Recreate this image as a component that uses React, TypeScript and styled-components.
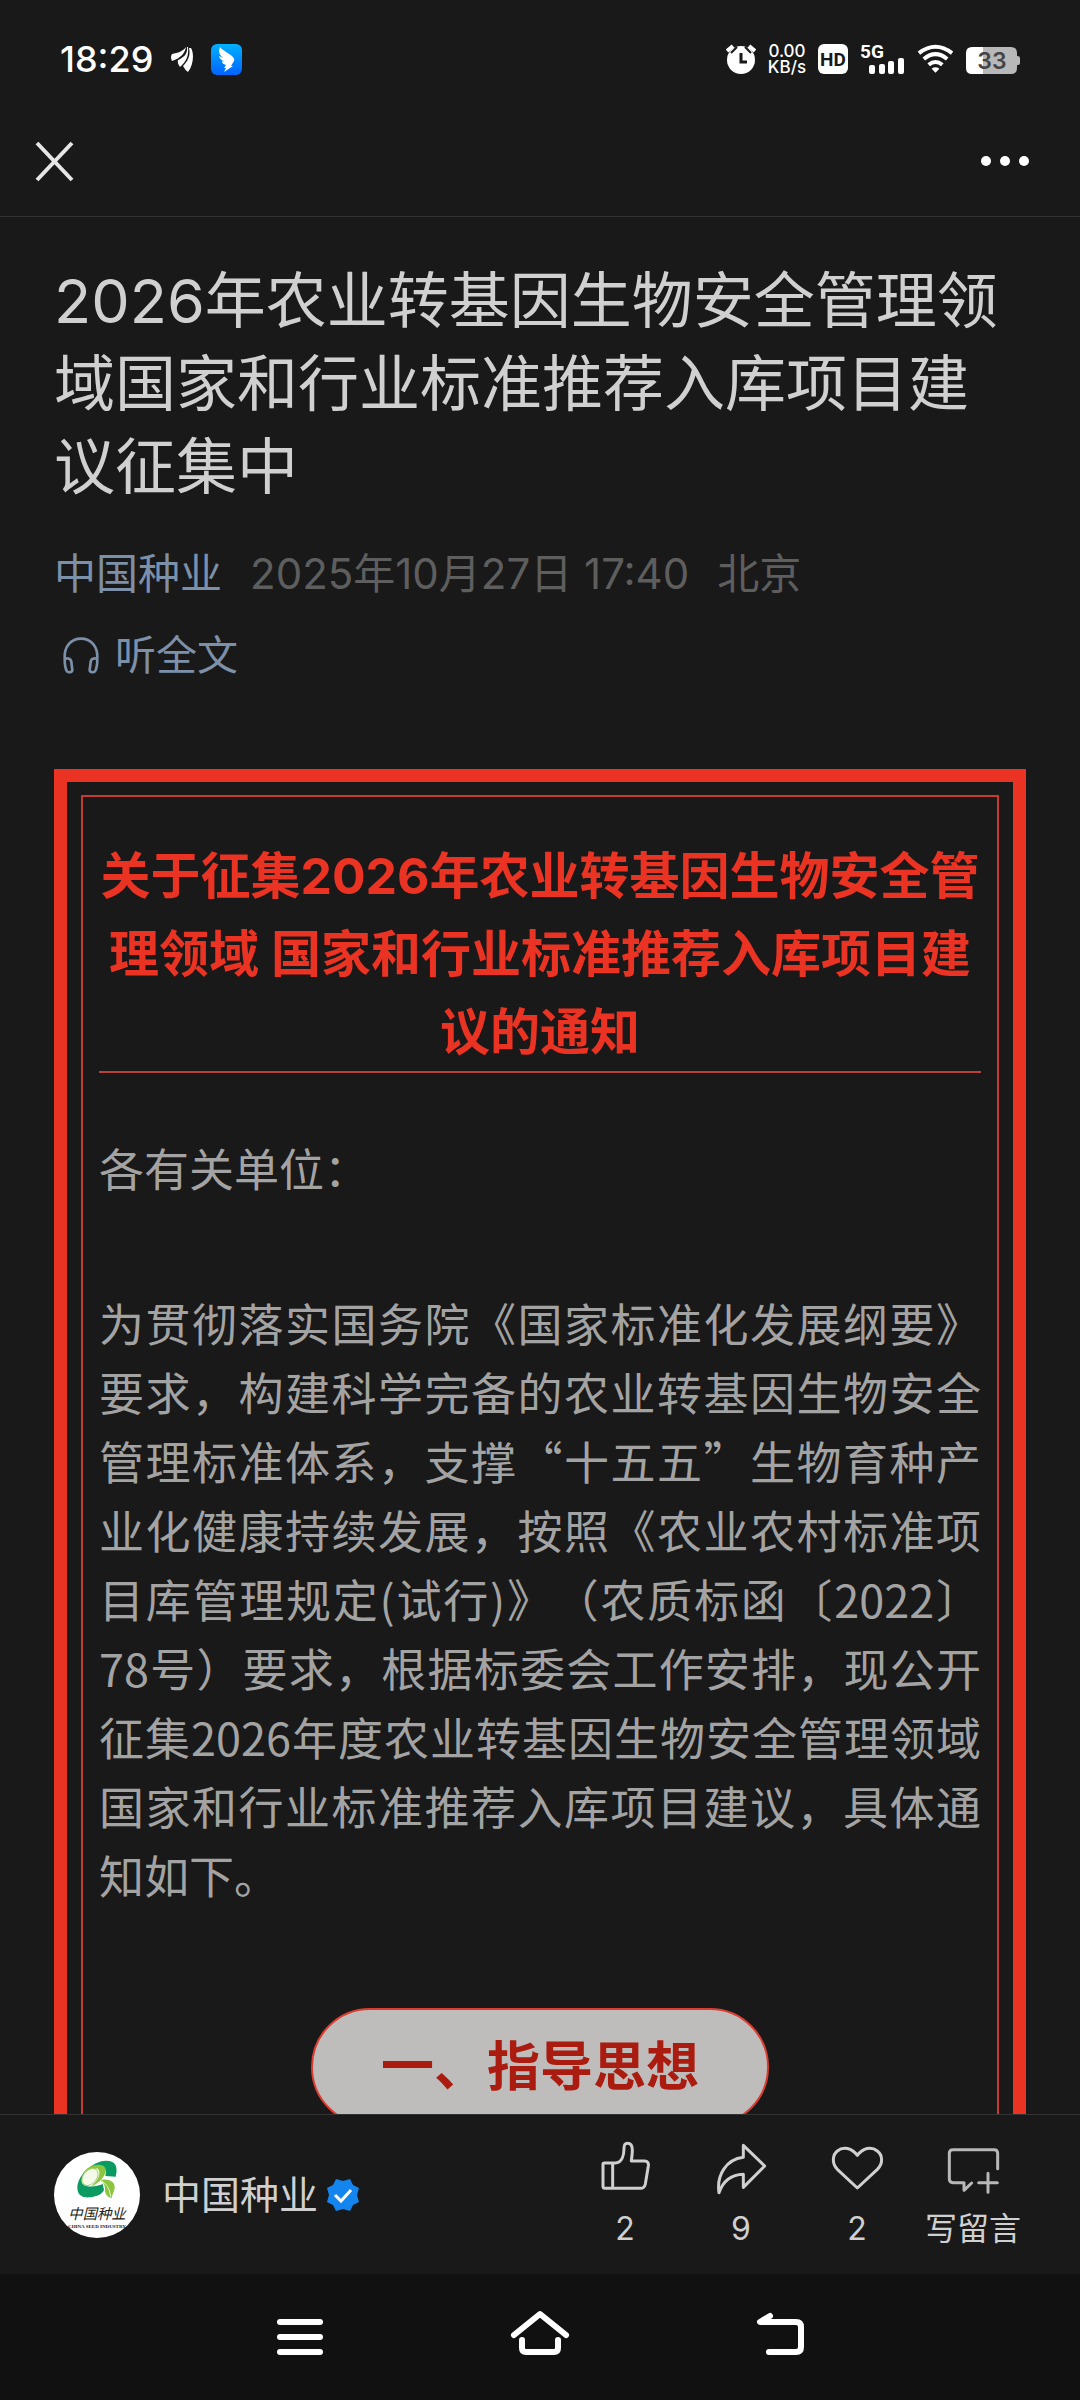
import React from "react";
import styled, { createGlobalStyle } from "styled-components";

const sans = `Inter, "Noto Sans CJK SC", sans-serif`;
const cjk = `"Noto Sans CJK SC", sans-serif`;

const GlobalStyle = createGlobalStyle`
  *, *::before, *::after { box-sizing: border-box; }
  body {
    margin: 0;
    background: #191919;
    font-family: ${sans};
    text-spacing-trim: space-all;
  }
  h1, h2, h3, p { margin: 0; font-weight: 400; }
  button {
    padding: 0;
    border: 0;
    background: none;
    color: inherit;
    font: inherit;
    cursor: pointer;
  }
  a { color: inherit; text-decoration: none; }
  svg { display: block; flex: none; }
`;

const Screen = styled.div`
  display: flex;
  flex-direction: column;
  height: 100vh;
  background: #191919;
  color: #d0d0d0;
`;

/* Status bar */

const StatusBar = styled.div`
  display: flex;
  flex: none;
  align-items: center;
  justify-content: space-between;
  height: 106px;
  padding: 12px 60px 0;
  color: #fff;
`;

const StatusGroup = styled.div<{ $gap: number }>`
  display: flex;
  align-items: center;
  gap: ${(p) => p.$gap}px;
`;

const Clock = styled.time`
  font-size: 36px;
  font-weight: 500;
  line-height: 40px;
`;

const NetSpeed = styled.div`
  display: flex;
  flex-direction: column;
  align-items: center;
  width: 38px;
  font-weight: 500;
  font-size: 17px;
  line-height: 16px;
`;

/* Title bar */

const TitleBar = styled.header`
  display: flex;
  flex: none;
  align-items: center;
  justify-content: space-between;
  height: 111px;
  padding: 0 47px 0 34px;
  border-bottom: 1px solid #333;
`;

const IconButton = styled.button`
  display: flex;
  align-items: center;
  justify-content: center;
`;

/* Article */

const Article = styled.main`
  flex: 1;
  min-height: 0;
  overflow: hidden;
  padding: 43px 54px 0;
`;

const Headline = styled.h1`
  font-size: 61px;
  line-height: 83px;
`;

const Meta = styled.div`
  display: flex;
  gap: 28px;
  margin-top: 36px;
  color: #5e5e5e;
  font-size: 42px;
  line-height: 58px;
`;

const Author = styled.a`
  color: #7d90a9;
`;

const Listen = styled.button`
  display: flex;
  align-items: center;
  gap: 15px;
  margin: 23px 0 0 8px;
  color: #7d90a9;
  font-size: 41px;
  line-height: 58px;
`;

const Frame = styled.section`
  margin-top: 85px;
  padding: 13px 14px;
  border: 13px solid #ea3323;
`;

const FrameInner = styled.div`
  padding: 40px 16px 60px;
  border: 2px solid #c63a2e;
`;

const NoticeTitle = styled.h2`
  border-bottom: 2px solid #b9413a;
  color: #ea3323;
  font-size: 50px;
  font-weight: 700;
  line-height: 78px;
  text-align: center;
`;

const Paragraph = styled.p<{ $gap: number }>`
  margin-top: ${(p) => p.$gap}px;
  color: #a3a3a3;
  font-family: ${cjk};
  font-size: 45px;
  line-height: 69px;
  text-align: justify;
`;

const SectionPill = styled.h3`
  width: fit-content;
  margin: 99px auto 0;
  padding: 0 68px;
  border: 2px solid #dc3d30;
  border-radius: 59px;
  background: #bfbdbb;
  color: #aa1c10;
  font-size: 53px;
  font-weight: 700;
  line-height: 114px;
  white-space: nowrap;
`;

/* Bottom bar */

const BottomBar = styled.footer`
  display: flex;
  flex: none;
  align-items: center;
  justify-content: space-between;
  height: 160px;
  padding: 0 49px 0 54px;
  border-top: 1px solid #333;
`;

const Account = styled.a`
  display: flex;
  align-items: center;
  font-size: 39px;
  line-height: 56px;
`;

const AccountName = styled.span`
  margin: 0 8px 0 22px;
`;

const Actions = styled.div`
  display: flex;
`;

const Action = styled.button`
  display: flex;
  flex-direction: column;
  align-items: center;
  gap: 11px;
  width: 116px;
  padding-top: 4px;
  font-size: 32px;
  line-height: 46px;
  white-space: nowrap;
`;

const SystemNav = styled.nav`
  display: flex;
  flex: none;
  justify-content: center;
  height: 126px;
  background: #111;
`;

const NavButton = styled(IconButton)`
  width: 240px;
`;

const BirdIcon = () => (
  <svg width="22" height="30" viewBox="0 0 22 30" fill="#fff" aria-hidden="true">
    <path d="M1 10C7 9 12 7 15 3C14 9 10 14 1 17Q-1 13 1 10Z" />
    <path d="M16 3C17 10 12 14 7 16Q6 19 9 23C15 18 18 12 17 3Z" />
    <path d="M18 4C20 12 16 18 12 22Q14 26 17 28C23 20 23 9 20 4Z" />
  </svg>
);

const WingAppIcon = () => (
  <svg width="31" height="31" viewBox="0 0 31 31" aria-hidden="true">
    <defs>
      <linearGradient id="wingSky" x1="0" y1="0" x2="0" y2="1">
        <stop offset="0" stopColor="#00b0ff" />
        <stop offset="1" stopColor="#0064ff" />
      </linearGradient>
    </defs>
    <rect width="31" height="31" rx="6" fill="url(#wingSky)" />
    <path
      d="M9 3C12 7 18 9 22 13Q24 15 23 17L20 22H22L13 28L15 24H13L15 21C12 20 11 19 11 17L14 18C10 16 8 14 8 12L12 14C9 11 8 9 8 7Z"
      fill="#fff"
    />
  </svg>
);

const AlarmIcon = () => (
  <svg width="30" height="30" viewBox="0 0 30 30" aria-hidden="true">
    <circle cx="15" cy="16" r="14" fill="#fff" />
    <path d="M5 9L11 3M25 9L19 3" stroke="#191919" strokeWidth="2" />
    <path d="M1 7L7 2M29 7L23 2" stroke="#fff" strokeWidth="4" />
    <path d="M15 9V18H21" fill="none" stroke="#191919" strokeWidth="3" />
  </svg>
);

const HdIcon = () => (
  <svg width="30" height="30" viewBox="0 0 30 30" role="img">
    <rect width="30" height="30" rx="6" fill="#fff" />
    <text x="15" y="22" textAnchor="middle" fontFamily="Roboto, sans-serif" fontSize="19" fontWeight="700" fill="#191919">
      HD
    </text>
  </svg>
);

const SignalIcon = () => (
  <svg width="45" height="42" viewBox="0 -6 45 42" role="img">
    <text x="0" y="14" fontFamily="Roboto, sans-serif" fontSize="19" fontWeight="700" fill="#fff">
      5G
    </text>
    <g fill="#fff">
      <rect x="9" y="21" width="6" height="9" rx="2" />
      <rect x="19" y="20" width="6" height="10" rx="2" />
      <rect x="28" y="17" width="6" height="13" rx="2" />
      <rect x="38" y="14" width="6" height="16" rx="2" />
    </g>
  </svg>
);

const WifiIcon = () => (
  <svg width="37" height="30" viewBox="0 0 38 30" fill="none" stroke="#fff" strokeWidth="4" aria-hidden="true">
    <path d="M2 9Q19-4 36 9" />
    <path d="M7 15Q19 5 31 15" />
    <path d="M12 21Q19 15 26 21" />
    <path d="M19 29L15 25Q19 22 23 25Z" fill="#fff" stroke="none" />
  </svg>
);

const BatteryIcon = () => (
  <svg width="54" height="30" viewBox="0 0 54 30" role="img">
    <path d="M6 3H17V30H6Q0 30 0 24V9Q0 3 6 3Z" fill="#fff" />
    <path d="M17 3H45Q51 3 51 9V12Q54 12 54 14V19Q54 21 51 21V24Q51 30 45 30H17Z" fill="#b8b8b8" />
    <text x="26" y="25" textAnchor="middle" fontFamily="Inter, sans-serif" fontSize="23" fontWeight="600" fill="#444">
      33
    </text>
  </svg>
);

const CloseIcon = () => (
  <svg width="41" height="41" viewBox="0 0 41 41" stroke="#e6e6e6" strokeWidth="4" aria-hidden="true">
    <path d="M3 2L38 39M38 2L3 39" />
  </svg>
);

const MoreIcon = () => (
  <svg width="56" height="20" viewBox="0 0 56 20" fill="#fff" aria-hidden="true">
    <circle cx="9" cy="10" r="5" />
    <circle cx="28" cy="10" r="5" />
    <circle cx="47" cy="10" r="5" />
  </svg>
);

const HeadphonesIcon = () => (
  <svg width="38" height="38" viewBox="0 0 114 114" fill="none" stroke="currentColor" strokeWidth="8" aria-hidden="true">
    <path d="M8 68C6 30 28 8 57 8C86 8 108 30 106 68" />
    <path d="M8 68C8 86 10 98 15 106C20 111 31 109 31 102L28 78C27 66 10 64 8 72" />
    <path d="M106 68C106 86 104 98 99 106C94 111 83 109 83 102L86 78C87 66 104 64 106 72" />
  </svg>
);

const AvatarLogo = () => (
  <svg width="86" height="86" viewBox="162 154 258 258" role="img">
    <circle cx="291" cy="283" r="129" fill="#fff" />
    <path
      d="M347 228C355 196 346 180 318 180C275 182 232 225 232 262C232 285 250 292 270 290C292 287 306 281 312 268L308 250C290 258 262 262 248 250C238 232 262 200 290 195C312 192 322 208 316 226Z"
      fill="#0b9a62"
    />
    <path d="M250 217C264 192 306 184 316 202C322 218 304 246 272 258C300 236 304 214 292 203Z" fill="#8cc63f" />
    <ellipse cx="270" cy="229" rx="20" ry="29" transform="rotate(42 270 229)" fill="#f4f9ea" stroke="#a9d36f" strokeWidth="3" />
    <path d="M298 239C325 232 343 242 344 258C345 270 336 280 335 293C318 288 314 276 315 262C314 250 308 243 298 239Z" fill="#8cc63f" />
    <path d="M300 239Q328 250 332 288" fill="none" stroke="#e6f3d3" strokeWidth="3" />
    <text x="291" y="355" textAnchor="middle" fontFamily="Noto Sans CJK SC, sans-serif" fontSize="43" fontStyle="italic" fill="#222">
      中国种业
    </text>
    <text x="291" y="382" textAnchor="middle" fontFamily="Liberation Serif, serif" fontSize="15" fontWeight="700" fill="#222">
      CHINA SEED INDUSTRY
    </text>
  </svg>
);

const VerifiedIcon = () => (
  <svg width="34" height="34" viewBox="0 0 34 34" aria-hidden="true">
    <path
      d="M10 1L17 3L24 1L27 7L33 10L31 17L33 24L27 27L24 33L17 31L10 33L7 27L1 24L3 17L1 10L7 7Z"
      fill="#1485ee"
    />
    <path d="M9 17L15 23L25 12" fill="none" stroke="#fff" strokeWidth="3" />
  </svg>
);

type LineIconProps = { viewBox: string; d: string; color?: string };

const LineIcon = ({ viewBox, d, color = "#d0d0d0" }: LineIconProps) => (
  <svg width="54" height="54" viewBox={viewBox} fill="none" stroke={color} strokeWidth="9" strokeLinejoin="round" strokeLinecap="round" aria-hidden="true">
    <path d={d} />
  </svg>
);

const actions = [
  {
    name: "点赞",
    label: "2",
    viewBox: "116 123 162 162",
    d: "M131 193Q131 189 135 189H168C188 188 194 165 194 145C194 133 197 130 204 130C214 130 219 138 219 150C219 165 217 172 216 183H256C265 183 268 189 267 198L258 252Q255 265 244 265H137Q131 265 131 259ZM160 190V265",
  },
  {
    name: "分享",
    label: "9",
    viewBox: "463 123 162 162",
    d: "M551 136L615 198L551 262V223C515 224 490 245 478 278C470 225 500 178 551 172Z",
  },
  {
    name: "推荐",
    label: "2",
    viewBox: "810 123 162 162",
    d: "M892 264L832 208C815 190 817 165 832 153C850 138 875 144 892 166C909 144 934 138 952 153C968 165 970 190 952 208Z",
  },
  {
    name: "写留言",
    label: "写留言",
    viewBox: "1160 123 162 162",
    d: "M1315 206V160Q1315 149 1304 149H1181Q1170 149 1170 160V237Q1170 248 1181 248H1214V271L1237 249M1258 248H1314M1286 220V277",
    color: "#b8b8b8",
  },
];

const MenuIcon = () => (
  <svg width="60" height="60" viewBox="0 0 60 60" fill="#fff" aria-hidden="true">
    <rect x="7" y="12" width="46" height="6" rx="3" />
    <rect x="7" y="27" width="46" height="6" rx="3" />
    <rect x="7" y="42" width="46" height="6" rx="3" />
  </svg>
);

const NavLineIcon = ({ d }: { d: string }) => (
  <svg width="60" height="60" viewBox="0 0 60 60" fill="none" stroke="#fff" strokeWidth="6" strokeLinecap="round" strokeLinejoin="round" aria-hidden="true">
    <path d={d} />
  </svg>
);

export default function App() {
  return (
    <Screen>
      <GlobalStyle />
      <StatusBar>
        <StatusGroup $gap={18}>
          <Clock>18:29</Clock>
          <BirdIcon />
          <WingAppIcon />
        </StatusGroup>
        <StatusGroup $gap={12}>
          <AlarmIcon />
          <NetSpeed>
            <span>0.00</span>
            <span>KB/s</span>
          </NetSpeed>
          <HdIcon />
          <SignalIcon />
          <WifiIcon />
          <BatteryIcon />
        </StatusGroup>
      </StatusBar>

      <TitleBar>
        <IconButton type="button" aria-label="关闭">
          <CloseIcon />
        </IconButton>
        <IconButton type="button" aria-label="更多">
          <MoreIcon />
        </IconButton>
      </TitleBar>

      <Article>
        <Headline>2026年农业转基因生物安全管理领域国家和行业标准推荐入库项目建议征集中</Headline>
        <Meta>
          <Author href="#account">中国种业</Author>
          <time>2025年10月27日 17:40</time>
          <span>北京</span>
        </Meta>
        <Listen type="button">
          <HeadphonesIcon />
          听全文
        </Listen>

        <Frame>
          <FrameInner>
            <NoticeTitle>
              关于征集2026年农业转基因生物安全管理领域 国家和行业标准推荐入库项目建议的通知
            </NoticeTitle>
            <Paragraph $gap={60}>各有关单位：</Paragraph>
            <Paragraph $gap={86}>
              为贯彻落实国务院《国家标准化发展纲要》要求，构建科学完备的农业转基因生物安全管理标准体系，支撑“十五五”生物育种产业化健康持续发展，按照《农业农村标准项目库管理规定(试行)》（农质标函〔2022〕78号）要求，根据标委会工作安排，现公开征集2026年度农业转基因生物安全管理领域国家和行业标准推荐入库项目建议，具体通知如下。
            </Paragraph>
            <SectionPill>一、指导思想</SectionPill>
          </FrameInner>
        </Frame>
      </Article>

      <BottomBar>
        <Account href="#account">
          <AvatarLogo />
          <AccountName>中国种业</AccountName>
          <VerifiedIcon />
        </Account>
        <Actions>
          {actions.map((a) => (
            <Action key={a.name} type="button" aria-label={a.name}>
              <LineIcon viewBox={a.viewBox} d={a.d} color={a.color} />
              <span>{a.label}</span>
            </Action>
          ))}
        </Actions>
      </BottomBar>

      <SystemNav>
        <NavButton type="button" aria-label="最近任务">
          <MenuIcon />
        </NavButton>
        <NavButton type="button" aria-label="主屏幕">
          <NavLineIcon d="M4 28L30 7L56 28M12 33V41Q12 45 16 45H44Q48 45 48 41V33" />
        </NavButton>
        <NavButton type="button" aria-label="返回">
          <NavLineIcon d="M20 9L10 15H46Q51 15 51 20V40Q51 45 46 45H19" />
        </NavButton>
      </SystemNav>
    </Screen>
  );
}
